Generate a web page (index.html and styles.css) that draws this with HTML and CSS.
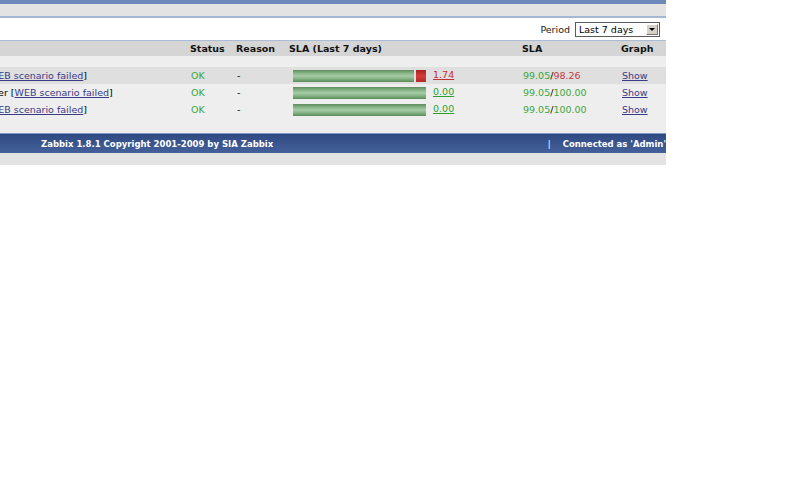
FILE: index.html
```html
<!DOCTYPE html>
<html>
	<head>
		<meta charset="UTF-8">
		<title>SLA report</title>
		<link rel="stylesheet" href="styles.css">
	</head>
	<body>
		<div class="page">
			<div class="topbar"></div>
			<div class="subbar"></div>
			<div class="filter">
				<span class="label">Period</span>
				<div class="combo">
					<span class="combo-text">Last 7 days</span>
					<span class="combo-btn"><span class="arrow"></span></span>
				</div>
			</div>
			<!--表格比窗口宽，左边被卷走了-->
			<div class="scroller">
				<table class="list">
					<tr class="header">
						<td class="c-name"></td>
						<td class="c-status">Status</td>
						<td class="c-reason">Reason</td>
						<td class="c-bar">SLA (Last 7 days)</td>
						<td class="c-sla">SLA</td>
						<td class="c-graph">Graph</td>
					</tr>
					<tr class="blank">
						<td colspan="6"></td>
					</tr>
					<tr class="row even">
						<td class="c-name">Home [<a href="#">WEB scenario failed</a>]</td>
						<td class="ok">OK</td>
						<td>-</td>
						<td>
							<div class="slabar">
								<span class="good" style="width: 121px"></span>
								<span class="bad" style="width: 10px"></span>
							</div>
							<a href="#" class="bad-link">1.74</a>
						</td>
						<td><span class="ok">99.05</span>/<span class="fail">98.26</span></td>
						<td><a href="#">Show</a></td>
					</tr>
					<tr class="row">
						<td class="c-name">Web server [<a href="#">WEB scenario failed</a>]</td>
						<td class="ok">OK</td>
						<td>-</td>
						<td>
							<div class="slabar">
								<span class="good" style="width: 133px"></span>
							</div>
							<a href="#" class="ok-link">0.00</a>
						</td>
						<td><span class="ok">99.05</span>/<span class="ok">100.00</span></td>
						<td><a href="#">Show</a></td>
					</tr>
					<tr class="row">
						<td class="c-name">Home [<a href="#">WEB scenario failed</a>]</td>
						<td class="ok">OK</td>
						<td>-</td>
						<td>
							<div class="slabar">
								<span class="good" style="width: 133px"></span>
							</div>
							<a href="#" class="ok-link">0.00</a>
						</td>
						<td><span class="ok">99.05</span>/<span class="ok">100.00</span></td>
						<td><a href="#">Show</a></td>
					</tr>
					<tr class="tail">
						<td colspan="6"></td>
					</tr>
				</table>
			</div>
			<div class="footer">
				<span class="copy">Zabbix 1.8.1 Copyright 2001-2009 by SIA Zabbix</span>
				<span class="sep">|</span>
				<span class="user">Connected as 'Admin'</span>
			</div>
			<div class="bottombar"></div>
		</div>
	</body>
</html>
```

FILE: styles.css
```css
*{
	margin: 0;
	padding: 0;
}
body{
	background: #fff;
	font-family: "DejaVu Sans", Verdana, sans-serif;
	font-size: 9.5px;
	color: #000;
}
.page{
	width: 666px;
	overflow: hidden;
}
.topbar{
	height: 4px;
	background: #6d89bb;
}
.subbar{
	height: 12px;
	background: #e3e3e3;
	border-bottom: 2px solid #a5b8d3;
}
.filter{
	height: 22px;
	display: flex;
	align-items: center;
	justify-content: flex-end;
	padding-right: 6px;
	border-bottom: 1px solid #a9bbd5;
}
.filter .label{
	margin-right: 5px;
	color: #222;
}
.combo{
	width: 83px;
	height: 13px;
	border: 1px solid #5a5a5a;
	display: flex;
	background: #fff;
}
.combo-text{
	flex: 1;
	padding-left: 3px;
	line-height: 13px;
}
.combo-btn{
	width: 12px;
	height: 11px;
	margin: 1px;
	background: #d4d0c8;
	border: 1px solid;
	border-color: #fff #777 #777 #fff;
	box-sizing: border-box;
	display: flex;
	align-items: center;
	justify-content: center;
}
.combo-btn .arrow{
	width: 0;
	height: 0;
	border-left: 3px solid transparent;
	border-right: 3px solid transparent;
	border-top: 3px solid #000;
}
.scroller{
	/*卷走49px*/
	margin-left: -49px;
	width: 715px;
}
.list{
	width: 715px;
	border-collapse: collapse;
	table-layout: fixed;
	background: #eeeeee;
}
.list td{
	padding: 0 2px 0 3px;
	white-space: nowrap;
	overflow: hidden;
	vertical-align: middle;
}
.list .c-name{ width: 232px; }
.list .c-status{ width: 41px; }
.list .c-reason{ width: 48px; }
.list .c-bar{ width: 228px; }
.list .c-sla{ width: 94px; }
.list .c-graph{ width: 42px; }
.list .header td{
	height: 15px;
	padding-left: 2px;
	background: #d5d5d5;
	font-weight: bold;
	color: #111;
}
.list .header .c-name{ width: 233px; }
.list .header .c-status{ width: 42px; }
.list .header .c-reason{ width: 49px; }
.list .header .c-bar{ width: 229px; }
.list .header .c-sla{ width: 95px; }
.list .header .c-graph{ width: 43px; }
.list .blank td{
	height: 11px;
}
.list .row td{
	height: 17px;
}
.list .row.even td{
	background: #dfdfdf;
}
.list .tail td{
	height: 15px;
}
.list a{
	color: #3a3a86;
}
.ok{
	color: #3aa83a;
}
.fail{
	color: #c43a3a;
}
.list a.ok-link{
	color: #2ea02e;
}
.list a.bad-link{
	color: #c03030;
}
.slabar{
	display: inline-flex;
	vertical-align: middle;
	width: 133px;
	height: 12px;
	margin-left: 3px;
	margin-right: 4px;
}
.slabar span{
	height: 12px;
}
.slabar .good{
	background: linear-gradient(#5e8c5e, #8cba8c 30%, #a6cca6 50%, #82b182 75%, #5a8a5a);
}
.slabar .bad{
	margin-left: 2px;
	background: linear-gradient(#a82222, #d43c3c 50%, #b42828);
}
.footer{
	height: 20px;
	display: flex;
	align-items: center;
	color: #fff;
	font-weight: bold;
	font-size: 8.5px;
	background: linear-gradient(#2f4a82, #44609a);
	border-top: 1px solid #7f97c4;
	box-sizing: border-box;
}
.footer .copy{
	margin-left: 41px;
}
.footer .sep{
	margin-left: auto;
	font-weight: normal;
}
.footer .user{
	margin-left: 12px;
	white-space: nowrap;
}
.bottombar{
	height: 12px;
	background: #e3e3e3;
}
```
